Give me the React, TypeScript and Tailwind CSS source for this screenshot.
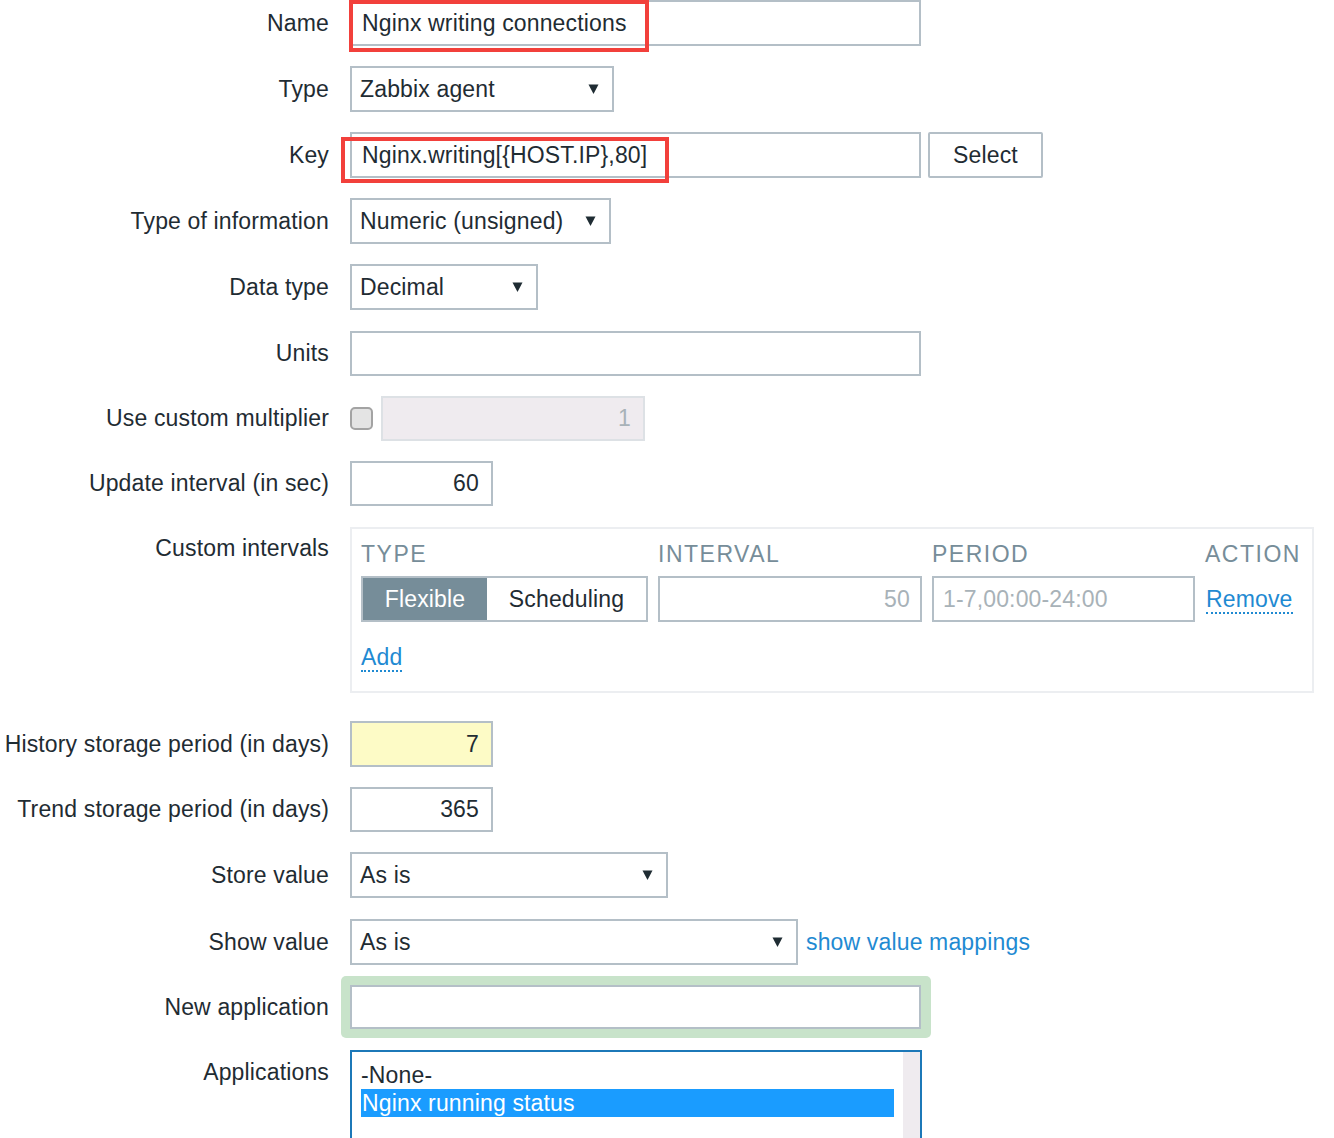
import React from 'react';

const font = "font-['Liberation_Sans',Arial,sans-serif]";

function Arrow() {
  return (
    <svg width="11" height="12" viewBox="0 0 11 12" className="shrink-0">
      <path d="M0.5 1.5h10L5.5 11z" fill="#1f2c33" />
    </svg>
  );
}

function Select({ value, width }: { value: string; width: string }) {
  return (
    <div
      className={`${width} h-[46px] border-2 border-[#b4bfc7] bg-white flex items-center justify-between pl-[8px] pr-[13px]`}
    >
      <span>{value}</span>
      <Arrow />
    </div>
  );
}

function Row({
  label,
  children,
  className = '',
  labelPad = '',
}: {
  label: string;
  children: React.ReactNode;
  className?: string;
  labelPad?: string;
}) {
  return (
    <div className={`grid grid-cols-[329px_1fr] gap-x-[21px] ${labelPad ? 'items-start' : 'items-center'} ${className}`}>
      <div className={`text-right whitespace-nowrap ${labelPad}`}>{label}</div>
      <div className="flex items-center">{children}</div>
    </div>
  );
}

export default function App() {
  return (
    <div className={`w-[1334px] h-[1138px] overflow-hidden bg-white text-[#1f2c33] text-[23px] tracking-[0.15px] ${font}`}>
      <div className="flex flex-col">
        {/* Name */}
        <Row label="Name">
          <div className="relative w-[571px] h-[46px] border-2 border-[#b4bfc7] flex items-center pl-[10px]">
            Nginx writing connections
            <div className="absolute left-[-3px] top-[-2px] w-[300px] h-[52px] border-[4px] border-[#f2403b] pointer-events-none" />
          </div>
        </Row>

        <Row label="Type" className="mt-[20px]">
          <Select value="Zabbix agent" width="w-[264px]" />
        </Row>

        {/* Key */}
        <Row label="Key" className="mt-[20px]">
          <div className="relative w-[571px] h-[46px] border-2 border-[#b4bfc7] flex items-center pl-[10px]">
            Nginx.writing[{'{'}HOST.IP{'}'},80]
            <div className="absolute left-[-11px] top-[3px] w-[328px] h-[46px] border-[4px] border-[#f2403b] pointer-events-none" />
          </div>
          <button className="ml-[7px] w-[115px] h-[46px] border-2 border-[#b4bfc7] rounded-[2px] bg-white text-[#1f2c33] tracking-[0.15px]">
            Select
          </button>
        </Row>

        <Row label="Type of information" className="mt-[20px]">
          <Select value="Numeric (unsigned)" width="w-[261px]" />
        </Row>

        <Row label="Data type" className="mt-[20px]">
          <Select value="Decimal" width="w-[188px]" />
        </Row>

        <Row label="Units" className="mt-[21px]">
          <div className="w-[571px] h-[45px] border-2 border-[#b4bfc7]" />
        </Row>

        <Row label="Use custom multiplier" className="mt-[20px]">
          <div className="w-[23px] h-[23px] rounded-[5px] border-2 border-[#a3a3a3] bg-[#e4e4e4]" />
          <div className="ml-[8px] w-[264px] h-[45px] border-2 border-[#dde1e5] bg-[#efebef] text-[#a8b2b8] flex items-center justify-end pr-[12px]">
            1
          </div>
        </Row>

        <Row label="Update interval (in sec)" className="mt-[20px]">
          <div className="w-[143px] h-[45px] border-2 border-[#b4bfc7] flex items-center justify-end pr-[12px]">60</div>
        </Row>

        {/* Custom intervals */}
        <Row label="Custom intervals" className="mt-[21px]" labelPad="pt-[4px]">
          <div className="w-[964px] h-[166px] border-2 border-[#eceef1] pl-[9px] pt-[3px]">
            <div className="grid grid-cols-[287px_264px_263px_auto] gap-x-[10px] text-[#768d99] tracking-[1.5px] h-[44px] items-center">
              <span>TYPE</span>
              <span>INTERVAL</span>
              <span>PERIOD</span>
              <span>ACTION</span>
            </div>
            <div className="grid grid-cols-[287px_264px_263px_auto] gap-x-[10px] items-center">
              <div className="flex h-[46px] border-2 border-[#b4bfc7]">
                <div className="w-[124px] bg-[#768d99] text-white flex items-center justify-center">Flexible</div>
                <div className="flex-1 flex items-center justify-center">Scheduling</div>
              </div>
              <div className="h-[46px] border-2 border-[#b4bfc7] text-[#a8b2b8] flex items-center justify-end pr-[10px]">50</div>
              <div className="h-[46px] border-2 border-[#b4bfc7] text-[#a8b2b8] flex items-center pl-[9px]">1-7,00:00-24:00</div>
              <div className="pl-[1px]">
                <span className="text-[#1f8ad2] border-b-2 border-dotted border-[#1f8ad2] leading-[26px] inline-block">Remove</span>
              </div>
            </div>
            <div className="mt-[18px]">
              <span className="text-[#1f8ad2] border-b-2 border-dotted border-[#1f8ad2] leading-[26px] inline-block">Add</span>
            </div>
          </div>
        </Row>

        <Row label="History storage period (in days)" className="mt-[28px]">
          <div className="w-[143px] h-[46px] border-2 border-[#b4bfc7] bg-[#fdfbc6] flex items-center justify-end pr-[12px]">7</div>
        </Row>

        <Row label="Trend storage period (in days)" className="mt-[20px]">
          <div className="w-[143px] h-[45px] border-2 border-[#b4bfc7] flex items-center justify-end pr-[12px]">365</div>
        </Row>

        <Row label="Store value" className="mt-[20px]">
          <Select value="As is" width="w-[318px]" />
        </Row>

        <Row label="Show value" className="mt-[21px]">
          <Select value="As is" width="w-[448px]" />
          <span className="ml-[8px] text-[#1f8ad2]">show value mappings</span>
        </Row>

        {/* New application */}
        <div className="grid grid-cols-[329px_1fr] gap-x-[12px] items-center mt-[11px]">
          <div className="text-right">New application</div>
          <div className="w-[590px] h-[62px] rounded-[5px] bg-[#c8e3ca] p-[9px]">
            <div className="w-[571px] h-[44px] border-2 border-[#b4bfc7] bg-white" />
          </div>
        </div>

        {/* Applications */}
        <Row label="Applications" className="mt-[12px]" labelPad="pt-[5px]">
          <div className="w-[572px] h-[140px] border-2 border-[#1c78b8] bg-white flex">
            <div className="flex-1 pl-[9px] pt-[9px] leading-[28px]">
              <div>-None-</div>
              <div className="bg-[#1a9cff] text-white pl-[1px]">Nginx running status</div>
            </div>
            <div className="w-[17px] bg-[#efebef] ml-[9px]" />
          </div>
        </Row>
      </div>
    </div>
  );
}
